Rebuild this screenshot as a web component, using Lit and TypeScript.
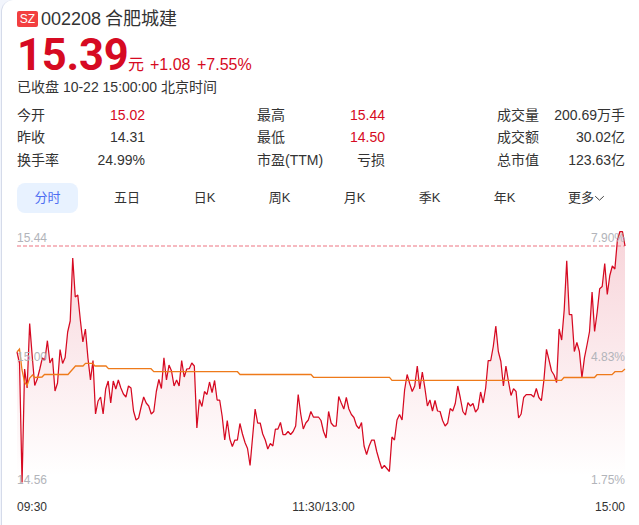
import { LitElement, html, svg, css } from "lit";
import { customElement } from "lit/decorators.js";

// Minute prices as vertical positions inside the 608 x 270 plot, offset by TOP.
const TOP = 225;
const PRICE: number[] = [
  352, 363, 482.5, 369, 388, 323.5, 356, 385.5, 379, 369, 358, 360, 340.7, 363, 358, 391, 383, 349.5, 363.5, 357.5,
  332, 321, 258, 297, 295, 320, 342, 329, 358, 380, 360.5, 414, 401, 397, 414, 389, 381, 403, 381, 389,
  380, 388, 394, 397, 386, 388, 411, 420, 418, 407, 397, 403, 406, 414, 411.5, 391.5, 379.5, 388.5, 357.7, 380,
  365, 371, 386, 380, 386, 360.5, 377, 369, 368.7, 363, 366, 428, 399.5, 406.5, 391.5, 394.5, 382, 392.5, 380.5, 400,
  400, 416.5, 440, 420.5, 439, 446.5, 440, 440, 423.5, 434, 442.5, 448.5, 465.5, 437, 409, 423, 423, 434, 440, 449,
  443.5, 446, 429, 429, 422.5, 434.5, 434.5, 431.5, 434.5, 431.5, 426, 394.5, 414, 429, 423, 420, 411.5, 417, 417, 417,
  420.5, 431.5, 438, 411.5, 423, 426, 426, 396.5, 403, 409, 397.5, 409, 414.5, 417.5, 425.5, 428.5, 422.5, 446, 454.5, 446,
  440, 440, 451.5, 460.5, 468.5, 465.5, 468.5, 471.5, 437, 440, 420, 414.5, 420, 390, 374.5, 383.5, 391.5, 386, 366, 389,
  372, 388, 406, 400, 411, 400.5, 411, 411.5, 420.5, 426, 423, 408.5, 411, 403.5, 386, 398, 411.5, 415, 402.7, 406,
  403.5, 412, 408.7, 392, 403, 388, 360.5, 360.5, 346.5, 326, 351.5, 361.5, 386, 366, 381.5, 395.5, 388.7, 391.5, 418, 414,
  397.5, 394.7, 394.7, 394.7, 397, 388.5, 397.5, 400.7, 380, 349.3, 360, 371, 375, 382.5, 329, 340, 310, 260.7, 314.5, 314.5,
  351.5, 342.5, 351.5, 377.7, 357.7, 345, 331.5, 292, 331.5, 312.5, 288.7, 286.5, 263.5, 294.5, 275.5, 266, 269, 240, 231.5, 231.5,
  246,
];

const AVERAGE: [number, number][] = [
  [0, 352], [2.5, 349], [5, 370], [7.5, 382], [10, 385.5], [12.7, 378], [15.5, 375], [18, 377.5], [25, 377], [27.5, 374.5],
  [51, 374.5], [58.5, 366], [66, 366], [68.5, 363.4], [75.5, 363.4], [78, 366], [89, 366], [91.5, 368.7], [134, 368.7],
  [136.8, 371.7], [220.5, 371.7], [223, 374.5], [294, 374.5], [296.5, 377.3], [372.5, 377.3], [375, 380.3], [544.5, 380.3],
  [547, 377.5], [577.5, 377.5], [580, 374.7], [595, 374.7], [598, 371.7], [605, 371.7], [608, 369],
];

const STATS = [
  [["今开", "15.02", "up"], ["昨收", "14.31", ""], ["换手率", "24.99%", ""]],
  [["最高", "15.44", "up"], ["最低", "14.50", "up"], ["市盈(TTM)", "亏损", ""]],
  [["成交量", "200.69万手", ""], ["成交额", "30.02亿", ""], ["总市值", "123.63亿", ""]],
];

@customElement("stock-chart")
class StockChart extends LitElement {
  static styles = css`
    :host { display: block; position: relative; width: 608px; height: 270px; }
    svg { display: block; width: 608px; height: 270px; overflow: visible; }
    .label { position: absolute; font-size: 12px; line-height: 14px; color: #b2b4ba; }
    .l { left: 0; }
    .r { right: 0; }
    .top { top: 6px; }
    .mid { top: 125px; }
    .low { top: 248px; }
  `;
  render() {
    const step = 608 / (PRICE.length - 1);
    const pts = PRICE.map((y, i) => `${(i * step).toFixed(2)},${y - TOP}`).join(" ");
    const avg = AVERAGE.map(([x, y]) => `${x},${y - TOP}`).join(" ");
    return html`
      <svg viewBox="0 0 608 270">
        ${svg`
          <defs>
            <linearGradient id="fill" gradientUnits="userSpaceOnUse" x1="0" y1="6" x2="0" y2="252">
              <stop offset="0" stop-color="#d60f2d" stop-opacity="0.18"/>
              <stop offset="1" stop-color="#d60f2d" stop-opacity="0"/>
            </linearGradient>
          </defs>
          <polygon points="0,258 ${pts} 608,258" fill="url(#fill)"/>
          <line x1="0" y1="21" x2="608" y2="21" stroke="#f3a3ac" stroke-width="1.3" stroke-dasharray="4 2"/>
          <polyline points=${pts} fill="none" stroke="#d60a22" stroke-width="1.25" stroke-linejoin="bevel"/>
          <polyline points=${avg} fill="none" stroke="#ee7a1a" stroke-width="1.3"/>
        `}
      </svg>
      <span class="label l top">15.44</span><span class="label r top">7.90%</span>
      <span class="label l mid">15.00</span><span class="label r mid">4.83%</span>
      <span class="label l low">14.56</span><span class="label r low">1.75%</span>
    `;
  }
}

@customElement("app-root")
class AppRoot extends LitElement {
  static styles = css`
    :host {
      display: block; height: 525px; overflow: hidden; background: #f2f5fc;
      font-family: "Liberation Sans", "Noto Sans CJK SC", sans-serif; color: #333;
    }
    .card {
      box-sizing: border-box; height: 540px; margin-left: 1px; padding: 9px 14px 0 15px;
      border-left: 1px solid #d5dbea; border-top-left-radius: 12px; background: #fff;
    }
    .title { display: flex; align-items: center; height: 20px; font-size: 18px; line-height: 20px; }
    .badge {
      width: 21px; height: 16px; margin-right: 3px; border-radius: 2px; background: #f23f40; color: #fff;
      font-size: 12px; line-height: 16px; text-align: center;
    }
    .name { margin-left: 4px; }
    .price { display: flex; align-items: baseline; height: 48px; line-height: 48px; color: #d60a22; font-size: 16px; }
    .big { width: 111px; font: 700 43.5px/54px Roboto, sans-serif; letter-spacing: -0.2px; }
    .change { margin-left: 6px; word-spacing: 2px; }
    .time { height: 20px; line-height: 20px; font-size: 14px; }
    .stats { display: flex; justify-content: space-between; margin-top: 7px; height: 68px; font-size: 14px; }
    .col { display: grid; grid-template-rows: 22px 23px 23px; width: 128px; }
    .row { display: flex; justify-content: space-between; line-height: 22px; white-space: nowrap; }
    .up { color: #d60a22; }
    .tabs { display: flex; align-items: center; margin: 11px 0 12px; height: 30px; font-size: 13px; line-height: 30px; }
    .tab { width: 75px; text-align: center; white-space: nowrap; }
    .active { width: 61px; border-radius: 8px; background: #e8f2ff; color: #4e6ef2; }
    .day { width: 98px; }
    .dayk { width: 57px; }
    .wk { width: 93px; }
    .wk + .tab { width: 57px; }
    .more { display: flex; align-items: center; margin-left: 35px; }
    .more svg { width: 11px; height: 10px; }
    .axis { display: flex; justify-content: space-between; margin-top: 5px; font-size: 12px; line-height: 14px; }
    .noon { margin-left: 5px; }
  `;
  render() {
    return html`
      <div class="card">
        <div class="title"><span class="badge">SZ</span><span>002208</span><span class="name">合肥城建</span></div>
        <div class="price"><span class="big">15.39</span><span>元</span><span class="change">+1.08 +7.55%</span></div>
        <div class="time">已收盘 10-22 15:00:00 北京时间</div>
        <div class="stats">
          ${STATS.map((c) => html`<div class="col">${c.map(([k, v, t]) => html`<div class="row"><span>${k}</span><span class=${t}>${v}</span></div>`)}</div>`)}
        </div>
        <div class="tabs">
          <span class="tab active">分时</span><span class="tab day">五日</span><span class="tab dayk">日K</span><span
            class="tab wk">周K</span><span class="tab">月K</span><span class="tab wk">季K</span><span class="tab">年K</span><span class="more">更多<svg viewBox="0 0 11 10"><path d="M1.2 3.2 L5.5 7.2 L9.8 3.2" fill="none" stroke="#444" stroke-width="1"/></svg></span>
        </div>
        <stock-chart></stock-chart>
        <div class="axis"><span>09:30</span><span class="noon">11:30/13:00</span><span>15:00</span></div>
      </div>
    `;
  }
}
